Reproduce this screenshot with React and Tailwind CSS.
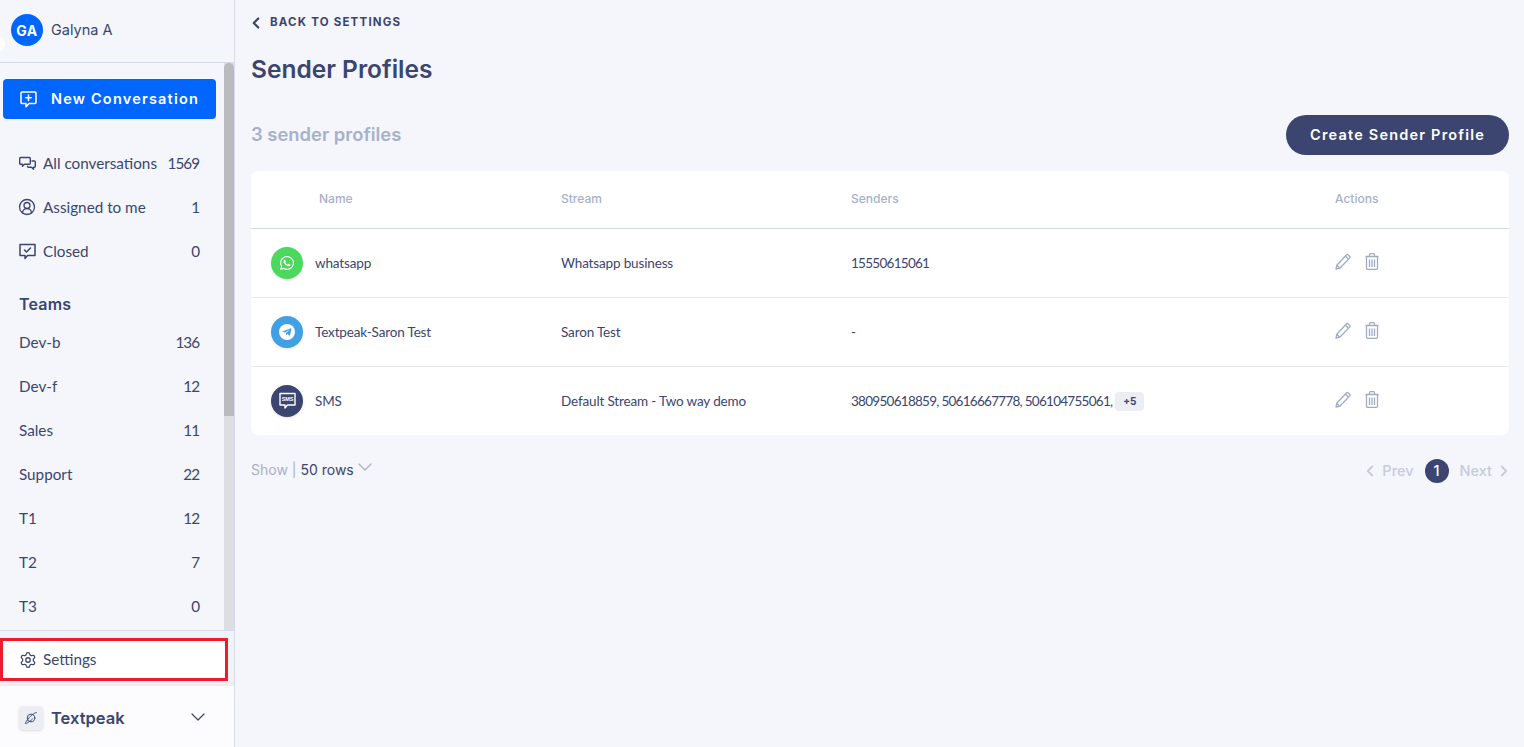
import { ChevronDown, ChevronLeft, ChevronRight, CircleUserRound, Settings } from "lucide-react";
import { FaTelegramPlane, FaWhatsapp } from "react-icons/fa";

const poppins = "font-['Inter',sans-serif]";

const topLinks = [
  { label: "All conversations", count: 1569, icon: <ChatsIcon /> },
  { label: "Assigned to me", count: 1, icon: <CircleUserRound size={18} strokeWidth={1.7} className="-ml-[1px]" /> },
  { label: "Closed", count: 0, icon: <ClosedIcon /> },
];

const teams = [
  { label: "Dev-b", count: 136 },
  { label: "Dev-f", count: 12 },
  { label: "Sales", count: 11 },
  { label: "Support", count: 22 },
  { label: "T1", count: 12 },
  { label: "T2", count: 7 },
  { label: "T3", count: 0 },
];

const profiles = [
  { name: "whatsapp", stream: "Whatsapp business", senders: "15550615061", color: "bg-[#4ad95c]", icon: <FaWhatsapp size={16} className="text-white" /> },
  {
    name: "Textpeak-Saron Test",
    stream: "Saron Test",
    senders: "-",
    color: "bg-[#41a0e3]",
    icon: (
      <span className="flex h-4 w-4 items-center justify-center rounded-full bg-white">
        <FaTelegramPlane size={10} className="text-[#41a0e3]" />
      </span>
    ),
  },
  { name: "SMS", stream: "Default Stream - Two way demo", senders: "380950618859, 50616667778, 506104755061,", extra: "+5", color: "bg-[#3b4570]", icon: <SmsIcon /> },
];

function ChatsIcon() {
  return (
    <svg width="17" height="17" viewBox="0 0 17 17" fill="none" stroke="currentColor" strokeWidth="1.4" strokeLinejoin="round" strokeLinecap="round">
      <path d="M1.700 2.500h8.600a1 1 0 0 1 1 1v4.800a1 1 0 0 1-1 1H5.500l-2 2v-2H1.700a1 1 0 0 1-1-1V3.500a1 1 0 0 1 1-1z" />
      <path d="M13 6h2.300a1 1 0 0 1 1 1v4.300a1 1 0 0 1-1 1h-.8v2l-2-2H9.500a1 1 0 0 1-1-1" />
    </svg>
  );
}

function ClosedIcon() {
  return (
    <svg width="17" height="17" viewBox="0 0 17 17" fill="none" stroke="currentColor" strokeWidth="1.5" strokeLinejoin="round" strokeLinecap="round">
      <path d="M1 1.500h15v11H8.500L6 15.500v-3H1z" />
      <path d="M5.500 7l2 2 4-4" />
    </svg>
  );
}

function NewChatIcon() {
  return (
    <svg width="17" height="17" viewBox="0 0 17 17" fill="none" stroke="currentColor" strokeWidth="1.5" strokeLinejoin="round" strokeLinecap="round">
      <path d="M2 1h13a1 1 0 0 1 1 1v9.500a1 1 0 0 1-1 1H9L6 15.800v-3.300H2a1 1 0 0 1-1-1V2a1 1 0 0 1 1-1z" />
      <path d="M8.500 4v5.500M5.800 6.750h5.400" />
    </svg>
  );
}

function SmsIcon() {
  return (
    <svg width="17" height="18" viewBox="0 0 17 18">
      <path d="M1 1.500h15v11.500H8.500L6 16v-3H1z" fill="none" stroke="#fff" strokeWidth="1.400" strokeLinejoin="round" />
      <text x="8.500" y="9.300" textAnchor="middle" fontSize="5.500" fontWeight="700" fill="#fff" fontFamily="Liberation Sans, sans-serif">SMS</text>
    </svg>
  );
}

function PlanetIcon() {
  return (
    <svg width="14" height="14" viewBox="0 0 14 14" fill="none" stroke="#3b4570" strokeWidth="1" strokeLinecap="round">
      <circle cx="7" cy="7" r="3.800" />
      <path d="M12.500 1.500C11.500.8 8 4 5.500 6.500S1 12 1.500 12.500 6 10.500 8.500 8" />
    </svg>
  );
}

function PencilIcon() {
  return (
    <svg width="16" height="17" viewBox="0 0 16 17" fill="none" stroke="#a0abc6" strokeWidth="1.300" strokeLinejoin="round">
      <path d="M1 16l.8-3.800L11.600 1.700a1 1 0 0 1 1.400 0l1.800 1.800a1 1 0 0 1 0 1.400L4.800 15.200z" />
      <path d="M10.400 3l3 3M1.800 12.300l2.900 2.900" />
    </svg>
  );
}

function TrashIcon() {
  return (
    <svg width="14" height="17" viewBox="0 0 14 17" fill="none" stroke="#a0abc6" strokeWidth="1.300" strokeLinejoin="round">
      <path d="M.5 3.500h13M4.500 3.500V1.700a1 1 0 0 1 1-1h3a1 1 0 0 1 1 1v1.800" />
      <path d="M1.500 3.500V15a1.500 1.500 0 0 0 1.500 1.500h8a1.500 1.500 0 0 0 1.500-1.500V3.500" />
      <path d="M4.500 6.500v7.500M7 6.500v7.500M9.500 6.500v7.500" />
    </svg>
  );
}

function NavRow({ icon, label, count }) {
  return (
    <div className="flex h-11 items-center pl-[19px] pr-[35px] text-[15.25px] text-[#3b4570]">
      {icon && <span className="mr-[7px] flex w-[17px] justify-center">{icon}</span>}
      <span className="flex-1">{label}</span>
      <span className="tracking-[-1px]">{count}</span>
    </div>
  );
}

function Sidebar() {
  return (
    <aside className="relative flex h-[747px] w-[235px] shrink-0 flex-col border-r border-[#d5dbea] bg-[#f4f6fb]">
      <div className="flex h-[63px] shrink-0 items-center gap-2 border-b border-[#d5dbea] pb-[2px] pl-[11px]">
        <span className={`flex h-8 w-8 items-center justify-center rounded-full bg-[#0066ff] text-[14px] font-bold tracking-[0.5px] text-white ${poppins}`}>GA</span>
        <span className={`text-[14.5px] text-[#3b4570] ${poppins}`}>Galyna A</span>
      </div>
      <span className="absolute left-[-13px] top-[35px] h-[18px] w-[18px] rounded-full bg-white" />

      <div className="relative flex-1 overflow-hidden">
        <div className="pt-[16px]">
          <button className={`ml-[3px] flex h-10 w-[213px] items-center gap-[14px] rounded bg-[#0066ff] pl-[17px] text-[14.5px] font-semibold tracking-[1.2px] text-white ${poppins}`}>
            <NewChatIcon />
            New Conversation
          </button>
          <div className="mt-[22px]">
            {topLinks.map((l) => (
              <NavRow key={l.label} {...l} />
            ))}
          </div>
          <div className={`mt-[20px] pl-[19px] text-[16px] font-semibold leading-[22px] tracking-[0.2px] text-[#3b4570] ${poppins}`}>Teams</div>
          <div className="mt-[5px]">
            {teams.map((t) => (
              <NavRow key={t.label} {...t} />
            ))}
          </div>
        </div>
        {/* scrollbar */}
        <div className="absolute bottom-0 right-0 top-0 w-[10px] bg-[#dcdee2]">
          <div className="h-[353px] rounded-t-full bg-[#b9bbbf]" />
        </div>
      </div>

      <div className="shrink-0 border-t border-[#d5dbea] bg-[#f2f3f8] pt-[7px]">
        <div className="flex h-[43px] w-[228px] items-center gap-[7px] border-[3px] border-[#ee1c2a] bg-white pl-4 text-[15.25px] text-[#3b4570]">
          <Settings size={18} strokeWidth={1.7} className="-mx-[0.5px]" />
          Settings
        </div>
        <div className="h-[5px] bg-[#edeef4]" />
      </div>
      <div className="flex h-[61px] shrink-0 items-center bg-[#fcfcfe] pl-[19px] pr-[24px] pt-[3px]">
        <span className="flex h-6 w-6 items-center justify-center rounded bg-[#eceef3] shadow-sm">
          <PlanetIcon />
        </span>
        <span className={`ml-2 flex-1 text-[16.5px] font-semibold text-[#3b4570] ${poppins}`}>Textpeak</span>
        <ChevronDown size={24} strokeWidth={1.2} className="-mt-[3px] text-[#3b4570]" />
      </div>
    </aside>
  );
}

function ProfileRow({ p }) {
  return (
    <div className="grid h-[69px] grid-cols-[310px_290px_484px_1fr] items-center border-b border-[#e6e8ee] text-[13.5px] tracking-[-0.15px] text-[#3b4570] last:h-[68px] last:border-b-0">
      <div className="flex items-center pl-5">
        <span className={`flex h-8 w-8 items-center justify-center rounded-full shadow-sm ${p.color}`}>{p.icon}</span>
        <span className="ml-3">{p.name}</span>
      </div>
      <div>{p.stream}</div>
      <div className="flex items-center tracking-[-0.72px]">
        {p.senders}
        {p.extra && <span className={`ml-[3px] flex h-[19px] w-[29px] items-center justify-center rounded bg-[#eceef3] text-[10px] font-bold tracking-normal ${poppins}`}>{p.extra}</span>}
      </div>
      <div className="flex items-center gap-[14px] pb-[4px]">
        <PencilIcon />
        <TrashIcon />
      </div>
    </div>
  );
}

export default function App() {
  return (
    <div className="flex h-[747px] w-[1524px] overflow-hidden bg-[#f4f6fb] font-['Lato',sans-serif]">
      <Sidebar />
      <main className="flex-1 pl-4 pr-[15px]">
        <div className={`flex h-[45px] items-center gap-[5px] text-[11.5px] font-bold tracking-[1.2px] text-[#3b4570] ${poppins}`}>
          <ChevronLeft size={18} strokeWidth={3} className="-ml-[4px]" />
          BACK TO SETTINGS
        </div>
        <h1 className={`mt-[6px] text-[24.5px] font-semibold leading-[36px] text-[#3b4570] ${poppins}`}>Sender Profiles</h1>
        <div className="mt-[28px] flex h-10 items-center justify-between">
          <span className={`text-[18.4px] font-semibold text-[#a7b1ca] ${poppins}`}>3 sender profiles</span>
          <button className={`h-10 w-[223px] rounded-full bg-[#3b4570] text-[14.5px] font-semibold tracking-[1.2px] text-white ${poppins}`}>Create Sender Profile</button>
        </div>

        <div className="mt-4 rounded-lg bg-white">
          <div className={`grid h-[58px] grid-cols-[310px_290px_484px_1fr] items-center border-b border-[#d5dbea] pb-[1px] text-[12px] font-medium text-[#a7b1ca] ${poppins}`}>
            <div className="pl-[68px]">Name</div>
            <div>Stream</div>
            <div>Senders</div>
            <div>Actions</div>
          </div>
          {profiles.map((p) => (
            <ProfileRow key={p.name} p={p} />
          ))}
        </div>

        <div className="mt-[24px] flex h-6 items-center justify-between">
          <div className={`flex items-center gap-1 pb-[3px] text-[14px] text-[#a7b1ca] ${poppins}`}>
            Show |<span className="text-[#3b4570]">50 rows</span>
            <ChevronDown size={24} strokeWidth={1.2} className="-my-1 -ml-[5px] -translate-y-[3px] text-[#a7b1ca]" />
          </div>
          <div className={`flex items-center text-[14.5px] font-medium text-[#c6cbdb] ${poppins}`}>
            <ChevronLeft size={18} strokeWidth={2.4} />
            <span className="ml-[3px]">Prev</span>
            <span className="mx-[11px] flex h-6 w-6 items-center justify-center rounded-full bg-[#3b4570] text-white">1</span>
            <span className="mr-[3px]">Next</span>
            <ChevronRight size={18} strokeWidth={2.4} className="-mr-[4px]" />
          </div>
        </div>
      </main>
    </div>
  );
}
